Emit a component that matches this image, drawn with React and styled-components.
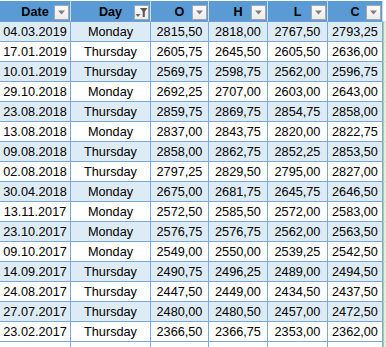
import React from "react";
import styled, { createGlobalStyle } from "styled-components";

const rows = [
  ["04.03.2019", "Monday", "2815,50", "2818,00", "2767,50", "2793,25"],
  ["17.01.2019", "Thursday", "2605,75", "2645,50", "2605,50", "2636,00"],
  ["10.01.2019", "Thursday", "2569,75", "2598,75", "2562,00", "2596,75"],
  ["29.10.2018", "Monday", "2692,25", "2707,00", "2603,00", "2643,00"],
  ["23.08.2018", "Thursday", "2859,75", "2869,75", "2854,75", "2858,00"],
  ["13.08.2018", "Monday", "2837,00", "2843,75", "2820,00", "2822,75"],
  ["09.08.2018", "Thursday", "2858,00", "2862,75", "2852,25", "2853,50"],
  ["02.08.2018", "Thursday", "2797,25", "2829,50", "2795,00", "2827,00"],
  ["30.04.2018", "Monday", "2675,00", "2681,75", "2645,75", "2646,50"],
  ["13.11.2017", "Monday", "2572,50", "2585,50", "2572,00", "2583,00"],
  ["23.10.2017", "Monday", "2576,75", "2576,75", "2562,00", "2563,50"],
  ["09.10.2017", "Monday", "2549,00", "2550,00", "2539,25", "2542,50"],
  ["14.09.2017", "Thursday", "2490,75", "2496,25", "2489,00", "2494,50"],
  ["24.08.2017", "Thursday", "2447,50", "2449,00", "2434,50", "2437,50"],
  ["27.07.2017", "Thursday", "2480,00", "2480,50", "2457,00", "2472,50"],
  ["23.02.2017", "Thursday", "2366,50", "2366,75", "2353,00", "2362,00"],
];

const headers = [
  { label: "Date" },
  { label: "Day", filtered: true },
  { label: "O" },
  { label: "H" },
  { label: "L" },
  { label: "C" },
];

const GlobalStyle = createGlobalStyle`
  body {
    margin: 0;
    background: #ffffff;
    font-family: "Liberation Sans", Arial, sans-serif;
  }
`;

const Sheet = styled.div`
  display: grid;
  grid-template-columns: 71px 80px 58px 59px 60px 55px 1fr;
  width: 386px;
  height: 347px;
  overflow: hidden;
  color: #000;
`;

const HeadCell = styled.div`
  position: relative;
  height: 21px;
  background: #5b9bd5;
  border-top: 1px solid #ffffff;
  border-right: 1px solid #c9dbf0;
  border-bottom: 1px solid #6d9fd6;
  box-sizing: border-box;
  height: 22px;
  display: flex;
  align-items: center;
  justify-content: center;
  font-weight: bold;
  font-size: 12.6px;
  padding-top: 2px;
`;

const Cell = styled.div`
  height: 20px;
  box-sizing: border-box;
  background: ${(p) => (p.$shade ? "#ddebf7" : "#ffffff")};
  border-right: 1px solid #7ba7db;
  border-bottom: 1px solid #7ba7db;
  display: flex;
  align-items: center;
  justify-content: center;
  font-size: 12.7px;
  white-space: nowrap;
  padding-top: 1px;
`;

const Edge = styled.div`
  height: ${(p) => (p.$head ? "22px" : "20px")};
  box-sizing: border-box;
  background: ${(p) => (p.$head ? "#ffffff" : "#e2efda")};
  border-left: ${(p) => (p.$head ? "none" : "1px solid #a9d08e")};
  border-bottom: 1px solid ${(p) => (p.$head ? "#dcdcdc" : "#d0e4c4")};
`;

const FilterButton = styled.span`
  position: absolute;
  right: 1px;
  bottom: 1px;
  width: 15px;
  height: 15px;
  box-sizing: border-box;
  background: linear-gradient(#fafafa, #ececec);
  border: 1px solid #a6a6a6;
  display: flex;
  align-items: center;
  justify-content: center;
`;

function Arrow() {
  return (
    <svg width="9" height="5" viewBox="0 0 9 5">
      <path d="M1 0.5 H8 L4.5 4.5 Z" fill="#7f7f7f" />
    </svg>
  );
}

function FilterIcon() {
  return (
    <svg width="13" height="11" viewBox="0 0 13 11">
      <path d="M0.5 7 H5.5 L3 10 Z" fill="#6a6a6a" />
      <path d="M5 1 H12.5 L9.8 4.5 V10 H7.7 V4.5 Z" fill="#5a5a5a" />
    </svg>
  );
}

export default function App() {
  return (
    <>
      <GlobalStyle />
      <Sheet>
        {headers.map((h) => (
          <HeadCell key={h.label}>
            {h.label}
            <FilterButton>{h.filtered ? <FilterIcon /> : <Arrow />}</FilterButton>
          </HeadCell>
        ))}
        <Edge $head />
        {rows.map((r, i) => (
          <React.Fragment key={r[0]}>
            {r.map((v, j) => (
              <Cell key={j} $shade={i % 2 === 0}>
                {v}
              </Cell>
            ))}
            <Edge />
          </React.Fragment>
        ))}
        {headers.map((h) => (
          <Cell key={"empty" + h.label} />
        ))}
        <Edge />
      </Sheet>
    </>
  );
}
